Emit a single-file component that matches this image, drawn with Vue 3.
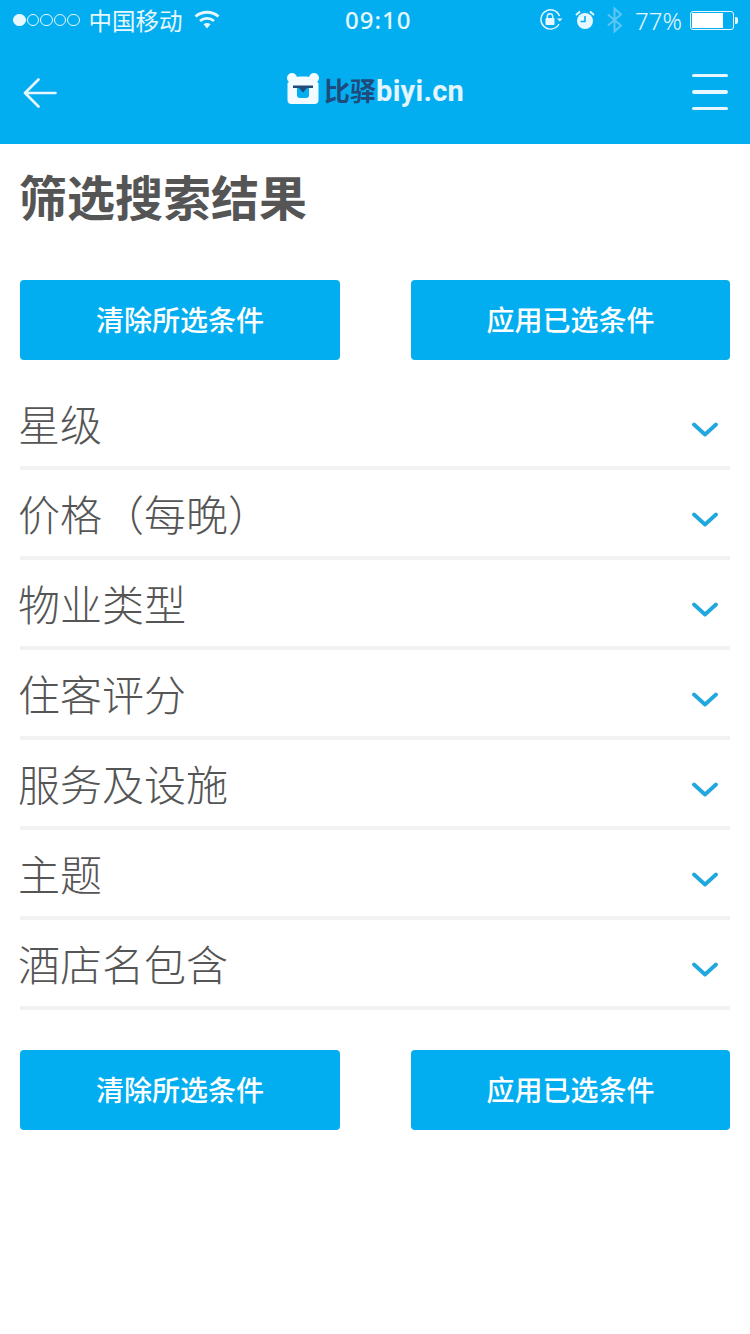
<template>
  <div class="page">
    <header class="header">
      <div class="status-bar">
        <div class="status-left">
          <span class="signal">
            <i v-for="n in 5" :key="n" class="dot" :class="{ on: n === 1 }"></i>
          </span>
          <span class="carrier">中国移动</span>
          <svg class="wifi" width="26" height="20" viewBox="0 0 26 20">
            <path d="M1.5 6.5C8 .8 18 .8 24.5 6.5" fill="none" stroke="#e6f7ff" stroke-width="2.8" />
            <path d="M6 11c4-3.400 10-3.400 14 0" fill="none" stroke="#e6f7ff" stroke-width="2.8" />
            <path d="M9.5 14.2c2-1.500 5-1.500 7 0L13 18.500z" fill="#e6f7ff" />
          </svg>
        </div>
        <span class="clock">09:10</span>
        <div class="status-right">
          <svg width="24" height="22" viewBox="0 0 24 22">
            <path d="M20.5 7A9.6 9.6 0 1 0 20 15" fill="none" stroke="#e6f7ff" stroke-width="1.4" />
            <path d="M18 9.500h5.500l-2.700 3z" fill="#e6f7ff" />
            <rect x="6.500" y="9" width="9" height="7" rx="1" fill="#e6f7ff" />
            <path d="M8.300 9V7.400a2.700 2.700 0 0 1 5.400 0V9" fill="none" stroke="#e6f7ff" stroke-width="1.4" />
          </svg>
          <svg class="alarm" width="20" height="20" viewBox="0 0 20 20">
            <circle cx="10" cy="11" r="8" fill="#e6f7ff" />
            <path d="M10 6v5.500H5.500" fill="none" stroke="#03aef0" stroke-width="1.6" />
            <path d="M1 5l4-3.500M19 5l-4-3.500" stroke="#e6f7ff" stroke-width="2" />
          </svg>
          <svg class="bluetooth" width="18" height="26" viewBox="0 0 18 26">
            <path d="M2 7.500l13 11-6.500 6V1.500l6.500 6-13 11" fill="none" stroke="#5cc6f5" stroke-width="2" />
          </svg>
          <span class="percent">77%</span>
          <span class="battery"><i class="battery-fill"></i></span>
          <span class="battery-tip"></span>
        </div>
      </div>
      <div class="nav-bar">
        <svg class="back" width="34" height="30" viewBox="0 0 34 30">
          <path d="M32.500 15H2M15.500 1.500L2 15l13.500 13.500" fill="none" stroke="#e6f7ff" stroke-width="2.600" stroke-linecap="round" stroke-linejoin="round" />
        </svg>
        <div class="logo">
          <svg width="32" height="31" viewBox="0 0 32 31">
            <circle cx="5" cy="5" r="5" fill="#f2fbff" />
            <circle cx="27" cy="5" r="5" fill="#f2fbff" />
            <path d="M2 9C3 5 8 3.500 16 3.500S29 5 30 9l1.500 1v17a4 4 0 0 1-4 4h-23a4 4 0 0 1-4-4V10z" fill="#f2fbff" />
            <path d="M10 14h12v8a3 3 0 0 1-3 3h-6a3 3 0 0 1-3-3z" fill="#03aef0" />
            <path d="M6 12.500h20v2.500H6zM12 15h8l-4 4.500z" fill="#1f4a7c" />
          </svg>
          <span class="logo-cn">比驿</span><span class="logo-en">biyi.cn</span>
        </div>
        <div class="menu">
          <i></i><i></i><i></i>
        </div>
      </div>
    </header>

    <main class="content">
      <h1 class="title">筛选搜索结果</h1>
      <div class="actions">
        <button class="btn">清除所选条件</button>
        <button class="btn">应用已选条件</button>
      </div>
      <ul class="filters">
        <li v-for="item in filters" :key="item" class="filter">
          <span class="filter-name">{{ item }}</span>
          <svg class="chevron" width="28" height="16" viewBox="0 0 28 16">
            <path d="M3 2.500L14 12.500 25 2.500" fill="none" stroke="#20a8de" stroke-width="3.800" stroke-linecap="round" stroke-linejoin="round" />
          </svg>
        </li>
      </ul>
      <div class="actions bottom">
        <button class="btn">清除所选条件</button>
        <button class="btn">应用已选条件</button>
      </div>
    </main>
  </div>
</template>

<script setup>
const filters = ['星级', '价格（每晚）', '物业类型', '住客评分', '服务及设施', '主题', '酒店名包含']
</script>

<style scoped>
.page {
  width: 750px;
  height: 1334px;
  background: #fff;
  font-family: "Liberation Sans", "Noto Sans CJK SC", sans-serif;
  overflow: hidden;
}

.header {
  height: 144px;
  background: #03aef0;
  color: #e6f7ff;
}

.status-bar {
  position: relative;
  height: 40px;
  display: flex;
  align-items: center;
  justify-content: space-between;
  padding: 0 12px 0 13px;
}

.status-left,
.status-right {
  display: flex;
  align-items: center;
}

.signal {
  display: flex;
  gap: 1px;
  margin-right: 9px;
}

.dot {
  width: 12.500px;
  height: 12.500px;
  box-sizing: border-box;
  border: 1.400px solid #e6f7ff;
  border-radius: 50%;
}

.dot.on {
  background: #e6f7ff;
}

.carrier {
  font-size: 23.500px;
  font-family: "Noto Sans CJK SC", sans-serif;
  font-weight: 400;
}

.wifi {
  margin-left: 11px;
}

.clock {
  position: absolute;
  left: 345px;
  top: 6px;
  font-size: 24px;
  line-height: 28px;
  font-family: "Noto Sans", sans-serif;
  font-weight: 500;
  letter-spacing: 1px;
}

.status-right svg {
  display: block;
}

.alarm {
  margin-left: 12px;
}

.bluetooth {
  margin-left: 11px;
}

.percent {
  margin-left: 11px;
  font-size: 24px;
  font-family: "Noto Sans", sans-serif;
  font-weight: 300;
}

.battery {
  width: 44px;
  height: 19px;
  margin-left: 8px;
  box-sizing: border-box;
  padding: 1px;
  border: 1px solid #e6f7ff;
  border-radius: 3px;
  display: block;
}

.battery-fill {
  display: block;
  width: 77%;
  height: 100%;
  background: #fff;
}

.battery-tip {
  width: 3px;
  height: 7px;
  margin-left: 1px;
  background: #e6f7ff;
  border-radius: 0 2px 2px 0;
}

.nav-bar {
  height: 104px;
  position: relative;
  display: flex;
  align-items: center;
  justify-content: space-between;
  padding: 0 22px 0 23px;
}

.back {
  margin-top: 1px;
}

.logo {
  position: absolute;
  left: 287px;
  top: 32px;
  display: flex;
  align-items: center;
  height: 32px;
}

.logo svg {
  margin-right: 5px;
}

.logo-cn {
  font-size: 26px;
  font-weight: 700;
  color: #1f4a7c;
  font-family: "Noto Sans CJK SC", sans-serif;
  margin-top: 2px;
}

.logo-en {
  font-size: 29px;
  font-weight: 700;
  color: #e3f6ff;
  font-family: "Roboto", sans-serif;
  letter-spacing: 0.300px;
  margin-top: 6px;
}

.menu {
  width: 36px;
  display: flex;
  flex-direction: column;
  gap: 13px;
}

.menu i {
  display: block;
  height: 3.500px;
  border-radius: 2px;
  background: #e6f7ff;
}

.content {
  padding: 0 20px;
}

.title {
  margin: 0 0 0 -1px;
  height: 136px;
  padding-top: 21px;
  box-sizing: border-box;
  font-size: 48px;
  line-height: 60px;
  font-weight: 700;
  color: #555;
  font-family: "Noto Sans CJK SC", sans-serif;
}

.actions {
  display: flex;
  justify-content: space-between;
}

.actions.bottom {
  margin-top: 40px;
}

.btn {
  width: 320px;
  height: 80px;
  border: 0;
  padding: 0 0 2px;
  border-radius: 4px;
  background: #03aef0;
  color: #fff;
  font-size: 28px;
  font-weight: 500;
  font-family: "Noto Sans CJK SC", sans-serif;
}

.actions .btn:last-child {
  width: 319px;
}

.filters {
  list-style: none;
  margin: 20px 0 0;
  padding: 0;
}

.filter {
  height: 90px;
  box-sizing: border-box;
  border-bottom: 4px solid #f2f2f2;
  display: flex;
  align-items: center;
  justify-content: space-between;
  padding-right: 11px;
}

.filter-name {
  font-size: 42px;
  font-weight: 300;
  line-height: 60px;
  margin: 0 0 0 -2px;
  color: #555;
  font-family: "Noto Sans CJK SC", sans-serif;
}

.chevron {
  margin-top: 14px;
}
</style>
